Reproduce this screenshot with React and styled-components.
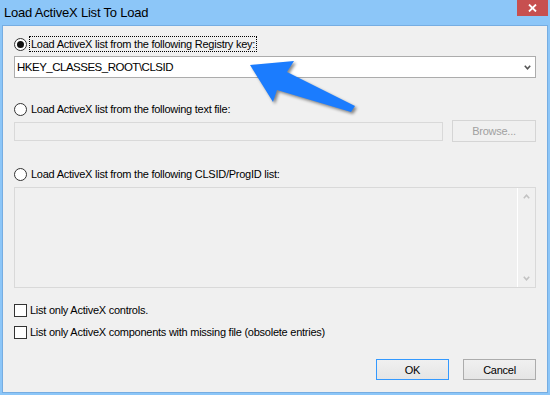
import React from "react";
import styled, { createGlobalStyle } from "styled-components";

const GlobalStyle = createGlobalStyle`
  html, body {
    margin: 0;
    padding: 0;
    background: #8cc6f8;
  }
`;

const UI_FONT = `"Liberation Sans", Arial, sans-serif`;

const Chevron = ({ up, color = "#555", width = 7, height = 5 }) => (
  <svg width={width} height={height} viewBox="0 0 7 5">
    <polyline
      points={up ? "0.8,4.2 3.5,1.2 6.2,4.2" : "0.8,0.8 3.5,3.8 6.2,0.8"}
      fill="none"
      stroke={color}
      strokeWidth="1.6"
    />
  </svg>
);

const App = () => {
  return (
    <>
      <GlobalStyle />
      <Window>
        <TitleBar>
          <Title>Load ActiveX List To Load</Title>
          <CloseButton>
            <svg width="9" height="8" viewBox="0 0 9 8">
              <path d="M1 0.5 L8 7.5 M8 0.5 L1 7.5" stroke="#fff" strokeWidth="1.8" />
            </svg>
          </CloseButton>
        </TitleBar>
        <Client>
          <OptionRow $mt={0}>
            <Radio>
              <Dot />
            </Radio>
            <Label $focus>Load ActiveX list from the following Registry key:</Label>
          </OptionRow>
          <Combo>
            <span>HKEY_CLASSES_ROOT\CLSID</span>
            <Chevron />
          </Combo>

          <OptionRow $mt={23}>
            <Radio />
            <Label>Load ActiveX list from the following text file:</Label>
          </OptionRow>
          <FileRow>
            <TextInput />
            <Button $disabled $width={84} $height={22}>
              Browse...
            </Button>
          </FileRow>

          <OptionRow $mt={24}>
            <Radio />
            <Label>Load ActiveX list from the following CLSID/ProgID list:</Label>
          </OptionRow>
          <ListBox>
            <ScrollBar>
              <Chevron up color="#c2c2c2" />
              <Chevron color="#c2c2c2" />
            </ScrollBar>
          </ListBox>

          <OptionRow $mt={14}>
            <CheckBox />
            <CheckLabel>List only ActiveX controls.</CheckLabel>
          </OptionRow>
          <OptionRow $mt={6}>
            <CheckBox />
            <CheckLabel>
              List only ActiveX components with missing file (obsolete entries)
            </CheckLabel>
          </OptionRow>

          <ButtonRow>
            <Button $default>OK</Button>
            <Button>Cancel</Button>
          </ButtonRow>
        </Client>

        <ArrowLayer width="550" height="395" viewBox="0 0 550 395">
          <polygon
            points="250,65 294,61 287,72 355,106 351,112 277,90 273,102"
            fill="#1b7cfe"
          />
        </ArrowLayer>
      </Window>
    </>
  );
};

export default App;

const Window = styled.div`
  position: relative;
  width: 550px;
  height: 395px;
  background: #8cc6f8;
  display: flex;
  flex-direction: column;
  overflow: hidden;
  font-family: ${UI_FONT};
  color: #000;
`;

const TitleBar = styled.div`
  height: 25px;
  display: flex;
  justify-content: space-between;
  align-items: flex-start;
`;

const Title = styled.div`
  padding: 5px 0 0 4px;
  font-size: 13px;
  line-height: 15px;
  letter-spacing: -0.2px;
  color: #000;
`;

const CloseButton = styled.div`
  width: 31px;
  height: 16px;
  margin-right: 2px;
  background: #c75050;
  display: flex;
  align-items: center;
  justify-content: center;
`;

const Client = styled.div`
  flex: 1;
  margin: 0 2px 2px 2px;
  border: 1px solid #76ade2;
  background: #f0f0f0;
  padding: 10px 11px 0 11px;
  display: flex;
  flex-direction: column;
  font-size: 11px;
  letter-spacing: -0.25px;
`;

const OptionRow = styled.div`
  display: flex;
  align-items: center;
  height: 16px;
  margin-top: ${(p) => p.$mt}px;
`;

const Radio = styled.div`
  width: 13px;
  height: 13px;
  box-sizing: border-box;
  border-radius: 50%;
  border: 1px solid #333;
  background: #fff;
  display: flex;
  align-items: center;
  justify-content: center;
  flex-shrink: 0;
`;

const Dot = styled.div`
  width: 7px;
  height: 7px;
  border-radius: 50%;
  background: #111;
`;

const Label = styled.span`
  margin-left: 2px;
  padding: 0 1px;
  height: 16px;
  box-sizing: border-box;
  border: 1px dotted ${(p) => (p.$focus ? "#000" : "transparent")};
  line-height: 14px;
  white-space: nowrap;
`;

const CheckBox = styled.div`
  width: 13px;
  height: 13px;
  box-sizing: border-box;
  border: 1px solid #333;
  background: #fff;
  flex-shrink: 0;
`;

const CheckLabel = styled.span`
  margin-left: 3px;
  line-height: 16px;
  white-space: nowrap;
`;

const Combo = styled.div`
  margin-top: 4px;
  height: 22px;
  box-sizing: border-box;
  border: 1px solid #acacac;
  background: #fff;
  display: flex;
  align-items: center;
  justify-content: space-between;
  padding: 0 4px 0 2px;
  font-size: 11.5px;
  letter-spacing: -0.5px;
`;

const FileRow = styled.div`
  margin-top: 3px;
  display: flex;
  align-items: center;
  gap: 9px;
`;

const TextInput = styled.div`
  flex: 1;
  height: 19px;
  box-sizing: border-box;
  border: 1px solid #d9d9d9;
  background: #f0f0f0;
`;

const Button = styled.div`
  width: ${(p) => p.$width || 73}px;
  height: ${(p) => p.$height || 21}px;
  box-sizing: border-box;
  border: 1px solid
    ${(p) => (p.$default ? "#3399ff" : p.$disabled ? "#d5d5d5" : "#acacac")};
  background: ${(p) =>
    p.$disabled ? "#f0f0f0" : "linear-gradient(#f0f0f0, #e5e5e5)"};
  color: ${(p) => (p.$disabled ? "#a0a0a0" : "#000")};
  display: flex;
  align-items: center;
  justify-content: center;
  flex-shrink: 0;
`;

const ListBox = styled.div`
  margin-top: 5px;
  height: 101px;
  box-sizing: border-box;
  border: 1px solid #d9d9d9;
  background: #f0f0f0;
  display: flex;
  justify-content: flex-end;
`;

const ScrollBar = styled.div`
  width: 17px;
  border-left: 1px solid #fff;
  display: flex;
  flex-direction: column;
  align-items: center;
  justify-content: space-between;
  padding: 6px 0 6px;
`;

const ButtonRow = styled.div`
  margin-top: 19px;
  display: flex;
  justify-content: flex-end;
  gap: 14px;
`;

const ArrowLayer = styled.svg`
  position: absolute;
  left: 0;
  top: 0;
  pointer-events: none;
  filter: drop-shadow(2px 2px 1.5px rgba(0, 0, 0, 0.45));
`;
